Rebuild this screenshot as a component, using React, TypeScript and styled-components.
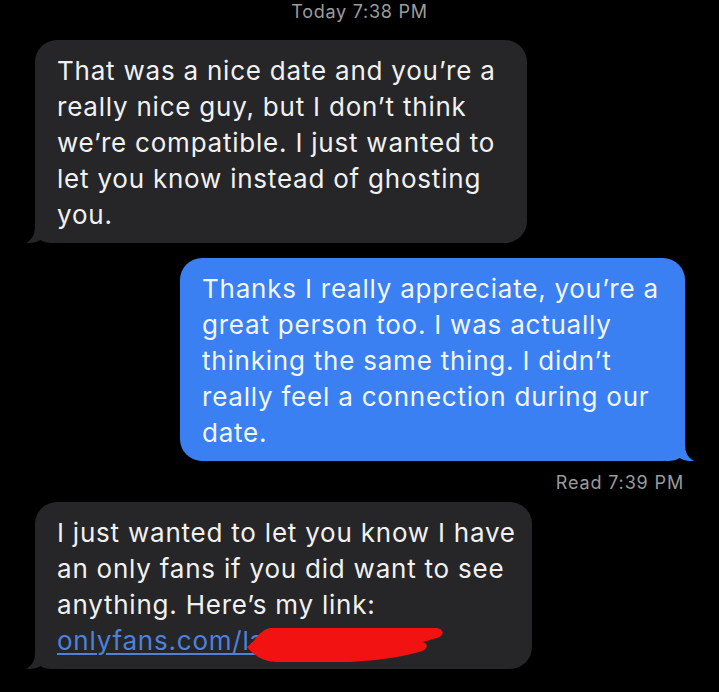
import React from 'react';
import styled, { createGlobalStyle } from 'styled-components';

const GlobalStyle = createGlobalStyle`
  html, body {
    margin: 0;
    padding: 0;
    background: #000;
  }
  body {
    font-family: Inter, "Liberation Sans", Arial, sans-serif;
    -webkit-font-smoothing: antialiased;
  }
`;

const GRAY = '#262628';
const BLUE = '#3b80f2';

const Thread = styled.div`
  width: 719px;
  height: 692px;
  overflow: hidden;
  display: flex;
  flex-direction: column;
  background: #000;
  padding-top: 1px;
  box-sizing: border-box;
`;

const Stamp = styled.div`
  text-align: center;
  font-size: 18px;
  line-height: 22px;
  letter-spacing: 0.75px;
  color: #9c9c9c;
  margin-bottom: 17px;
`;

const Bubble = styled.div<{ $mine?: boolean; $width: number }>`
  position: relative;
  align-self: ${p => (p.$mine ? 'flex-end' : 'flex-start')};
  margin: ${p => (p.$mine ? '0 34px 0 0' : '0 0 0 35px')};
  width: ${p => p.$width}px;
  box-sizing: border-box;
  padding: 13px 21px 10px 22px;
  border-radius: 22px;
  background: ${p => (p.$mine ? BLUE : GRAY)};
  color: ${p => (p.$mine ? '#f2f6ff' : '#f1f1f1')};
  font-size: 26px;
  line-height: 36px;
  letter-spacing: 0.78px;
  white-space: nowrap;
`;

const Tail = styled.svg<{ $mine?: boolean }>`
  position: absolute;
  bottom: 0;
  width: 30px;
  height: 24px;
  ${p => (p.$mine ? 'right: -10px; transform: scaleX(-1);' : 'left: -10px;')}
`;

const Gap = styled.div<{ $h: number }>`
  height: ${p => p.$h}px;
  flex: none;
`;

const Receipt = styled.div`
  align-self: flex-end;
  margin: 11px 35px 8px 0;
  font-size: 18px;
  line-height: 22px;
  letter-spacing: 0.85px;
  color: #9a9a9a;
`;

const LinkLine = styled.span`
  position: relative;
  display: inline-block;
  color: #4d82db;
  text-decoration: underline;
  text-decoration-thickness: 1.5px;
  text-underline-offset: 3px;
`;

const Scribble = styled.svg`
  position: absolute;
  left: 190px;
  top: 2px;
  width: 198px;
  height: 40px;
`;

const BubbleTail: React.FC<{ mine?: boolean }> = ({ mine }) => (
  <Tail $mine={mine} viewBox="0 0 30 24">
    <path
      d="M10 0 L10 8 C10 16 6.5 21 1 24 C6 24.6 12 23.2 15.5 21 C18 23 22 24 27 24 L30 24 L30 0 Z"
      fill={mine ? BLUE : GRAY}
    />
  </Tail>
);

const Message: React.FC<{ mine?: boolean; width: number; children: React.ReactNode }> = ({
  mine,
  width,
  children,
}) => (
  <Bubble $mine={mine} $width={width}>
    {children}
    <BubbleTail mine={mine} />
  </Bubble>
);

export default function App() {
  return (
    <>
      <GlobalStyle />
      <Thread>
        <Stamp>Today 7:38 PM</Stamp>
        <Message width={492}>
          That was a nice date and you’re a<br />
          really nice guy, but I don’t think<br />
          we’re compatible. I just wanted to<br />
          let you know instead of ghosting<br />
          you.
        </Message>
        <Gap $h={15} />
        <Message mine width={505}>
          Thanks I really appreciate, you’re a<br />
          great person too. I was actually<br />
          thinking the same thing. I didn’t<br />
          really feel a connection during our<br />
          date.
        </Message>
        <Receipt>Read 7:39 PM</Receipt>
        <Message width={497}>
          I just wanted to let you know I have<br />
          an only fans if you did want to see<br />
          anything. Here’s my link:<br />
          <LinkLine>
            onlyfans.com/la
            <Scribble viewBox="0 0 198 40">
              <path
                d="M6 17 C12 8 18 4 23 3 L190 3 C197 4 198 11 190 13 L176 17 C182 19 181 25 172 27 L160 30 C140 34 120 36 103 37 L30 37 C18 37 8 32 0 22 Z"
                fill="#f21212"
              />
            </Scribble>
          </LinkLine>
        </Message>
      </Thread>
    </>
  );
}
